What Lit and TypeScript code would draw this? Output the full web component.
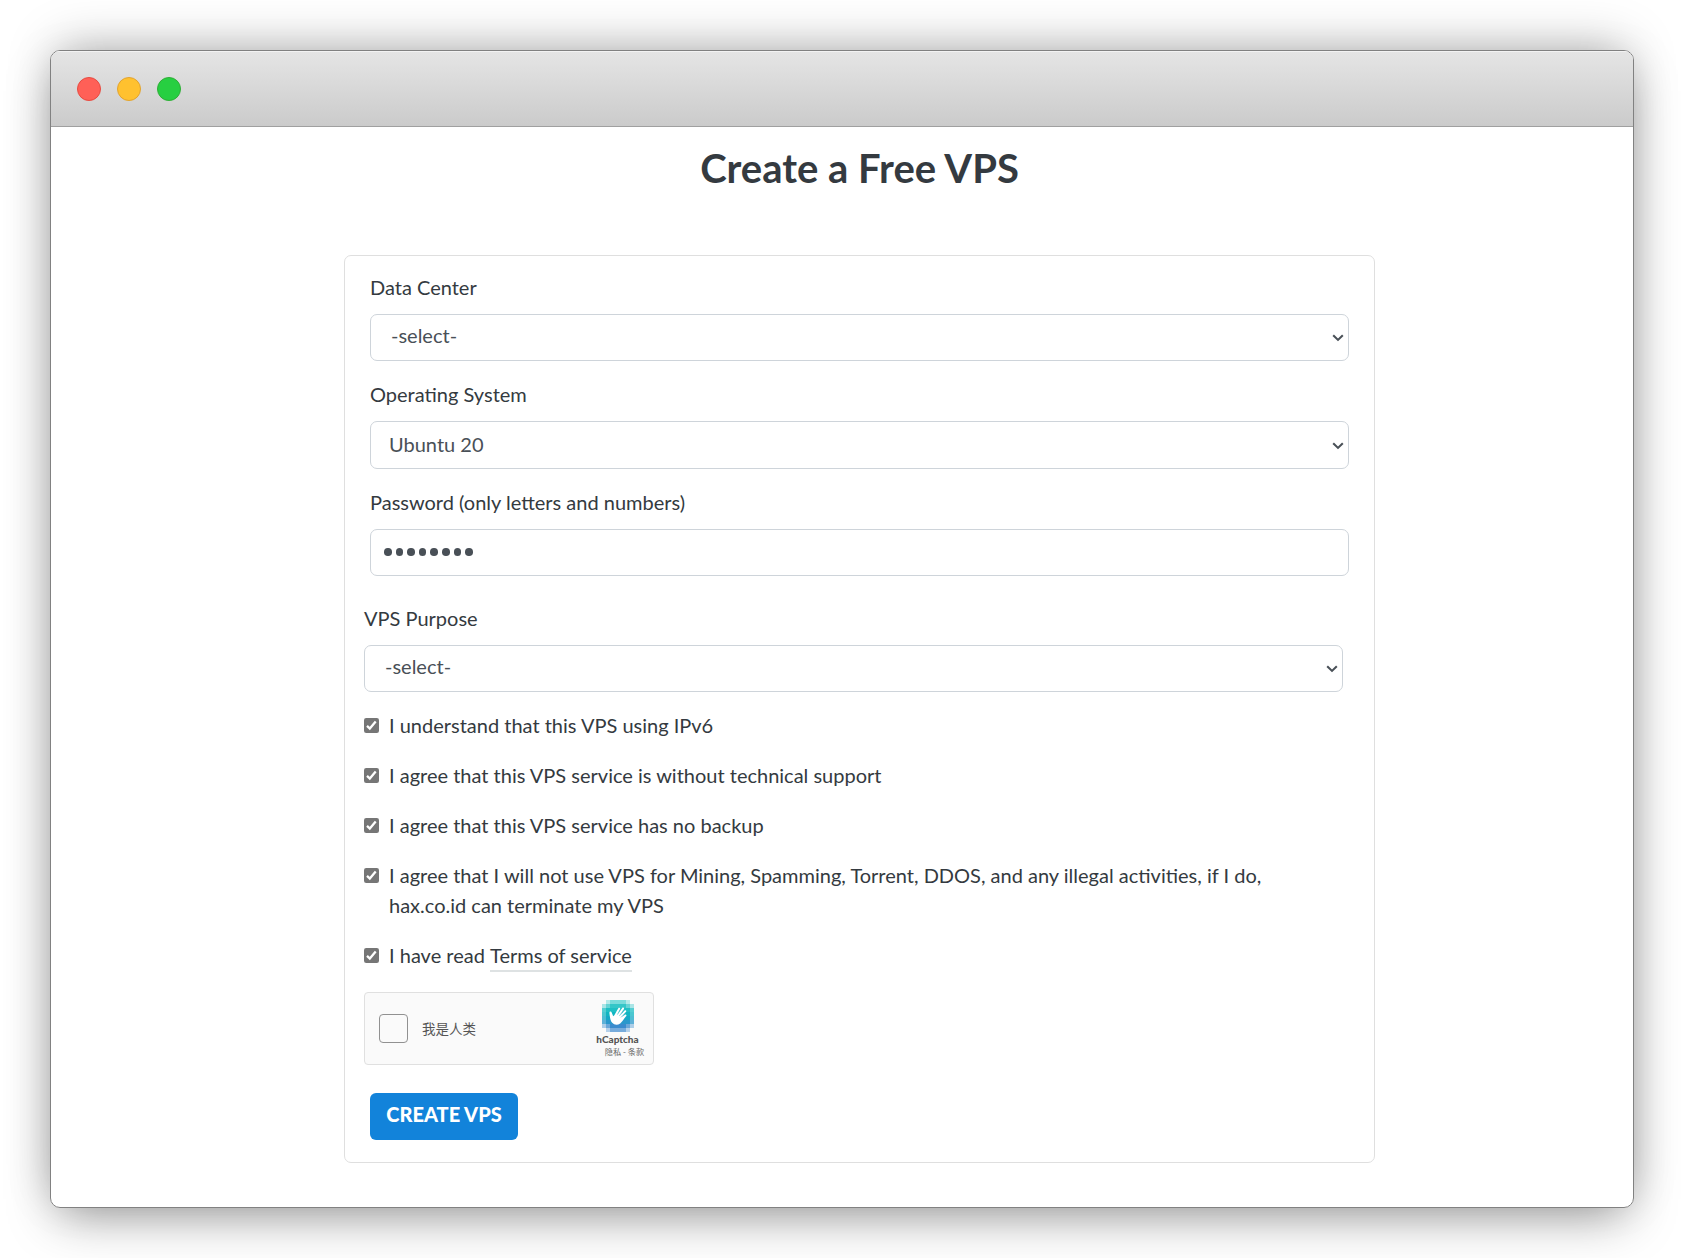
import { LitElement, html, css, svg } from "lit";
import { customElement } from "lit/decorators.js";

const chevron = html`<svg class="chevron" width="12" height="8" viewBox="0 0 12 8">
  <path d="M1.2 1.3 L6 5.9 L10.8 1.3" fill="none" stroke="#495057" stroke-width="2.1" />
</svg>`;

const tick = html`<svg class="tick" width="15" height="15" viewBox="0 0 15 15">
  <rect width="15" height="15" rx="2.2" fill="#767676" />
  <path d="M3 7.9 L5.8 10.6 L11.7 3.5" fill="none" stroke="#fff" stroke-width="2.3" />
</svg>`;

/* Pixel disc of the captcha mark: 8 × 8 cells, teal above and blue below, fading at the rim. */
const discColours = [
  "#4fd0d0", "#35c6c8", "#1fbfc4", "#10b5c2", "#14a9c6", "#2a98cc", "#3a8bce", "#4a90d2",
];
const cells = discColours.flatMap((fill, y) =>
  Array.from({ length: 8 }, (_, x) => {
    const r = Math.hypot(x - 3.5, y - 3.5);
    const opacity = r > 4.5 ? 0 : r > 4.2 ? 0.4 : r > 3.4 ? 0.75 : 1;
    return svg`<rect x=${x * 4} y=${y * 4} width="4" height="4" fill=${fill} opacity=${opacity} shape-rendering="crispEdges" />`;
  })
);

const logo = html`<svg class="logo" width="32" height="32" viewBox="0 0 32 32">
  ${cells}
  <path d="M10.2 22.8 C8.2 20.5 8 17.5 7.4 13 C7.4 11.3 9.2 11 9.7 12.6 L11.2 16.2 L12.3 15.3 L16.3 8.2 C17 7.1 18.6 7.9 18.1 9.2 L16 14 L20.2 8 C21 7 22.6 8 21.9 9.2 L18.3 15.2 L22.6 10.5 C23.6 9.6 24.8 10.8 24 11.9 L20 17 L23 14.8 C24.1 14.1 25 15.3 24.1 16.2 C22 18.3 20.6 21.4 18.2 23.4 C15.6 25.4 12.4 25.2 10.2 22.8 Z" fill="#fff" />
  <path d="M18 9.5 L15.4 14.6 M21.8 9.6 L17.4 15.9 M23.8 12.2 L19 17.4" stroke="#35bcca" stroke-width=".6" />
</svg>`;

@customElement("app-root")
export class AppRoot extends LitElement {
  static styles = css`
    :host {
      display: block;
      box-sizing: border-box;
      height: 1258px;
      padding: 50px;
      overflow: hidden;
      background: #fff;
      font: 400 20px/30px Lato, sans-serif;
      color: #343a40;
    }
    * { box-sizing: border-box; }
    .window {
      height: 1158px;
      border: 1px solid #818181;
      border-radius: 10px;
      overflow: hidden;
      background: #fff;
    }
    .shadow {
      border-radius: 10px;
      box-shadow: 0 16px 50px -8px rgba(0, 0, 0, 0.38), 0 -12px 50px -8px rgba(0, 0, 0, 0.25);
    }
    .bar {
      display: flex;
      align-items: center;
      gap: 16px;
      height: 76px;
      padding: 0 26px;
      border-bottom: 1px solid #a0a0a0;
      background: linear-gradient(#e5e5e5, #cbcbcb);
      box-shadow: inset 0 1px #f3f3f3;
    }
    .dot { width: 24px; height: 24px; border-radius: 50%; border: 1px solid; }
    .red { background: #ff6057; border-color: #e74b41; }
    .yellow { background: #ffc12f; border-color: #e2a32f; }
    .green { background: #27cf41; border-color: #2fae36; }
    .page { padding: 17px 0 0 293px; width: 1324px; }
    h1 {
      margin: 0 0 63px;
      text-align: center;
      font-size: 40px;
      line-height: 48px;
      font-weight: 700;
    }
    .card {
      width: 1031px;
      height: 908px;
      border: 1px solid #dfdfdf;
      border-radius: 7px;
      padding: 16px 25px 0;
    }
    .field { margin-bottom: 18px; }
    .label { display: block; margin-bottom: 12px; }
    .control {
      display: flex;
      align-items: center;
      justify-content: space-between;
      width: 979px;
      height: 47px;
      padding: 0 4px 5px 20px;
      border: 1px solid #ced4da;
      border-radius: 7px;
      color: #495057;
    }
    .chevron { margin-top: 5px; }
    .os { height: 48px; padding-left: 18px; padding-bottom: 2px; }
    .os .chevron { margin-top: 4px; }
    .password { justify-content: flex-start; gap: 4px; padding: 0 0 1px 13px; }
    .bullet { width: 7.6px; height: 7.6px; border-radius: 50%; background: #495057; }
    .lower { margin-left: -6px; padding-top: 9px; }
    .lower .field { margin-bottom: 19px; }
    .check { display: flex; gap: 10px; margin-bottom: 20px; }
    .copy { margin: -1px 0 1px; }
    .tick { flex: none; margin-top: 7px; }
    .terms { display: inline-block; height: 32px; border-bottom: 2px solid #dee2e3; }
    .captcha {
      display: flex;
      align-items: center;
      width: 290px;
      height: 73px;
      margin-top: -1px;
      padding-left: 14px;
      border: 1px solid #e0e0e0;
      border-radius: 4px;
      background: #fafafa;
    }
    .box { width: 29px; height: 29px; border: 1px solid #919191; border-radius: 4px; background: #fafafa; }
    .human { flex: 1; margin: 0 0 2px 14px; font: 13.5px/20px "Noto Sans CJK SC", sans-serif; color: #555; }
    .brand { display: flex; flex-direction: column; align-items: center; width: 71px; height: 71px; padding-top: 7px; }
    .logo { display: block; }
    .name { font-size: 10px; line-height: 12px; font-weight: 900; color: #555; margin-top: 1px; }
    .legal { font: 8.2px/12px "Noto Sans CJK SC", sans-serif; color: #666; margin: 0 0 0 14px; white-space: nowrap; }
    .create {
      display: block;
      width: 148px;
      height: 47px;
      margin: 28px 0 0 6px;
      padding: 0 0 5px;
      border: 0;
      border-radius: 6px;
      background: #1283da;
      color: #fff;
      font: 900 20px/30px Lato, sans-serif;
      white-space: nowrap;
    }
  `;

  private check(content: unknown) {
    return html`<div class="check">${tick}<div class="copy">${content}</div></div>`;
  }

  render() {
    return html`<div class="shadow"><div class="window">
      <div class="bar">
        <span class="dot red"></span><span class="dot yellow"></span><span class="dot green"></span>
      </div>
      <div class="page">
        <h1>Create a Free VPS</h1>
        <div class="card">
          <div class="field">
            <span class="label">Data Center</span>
            <div class="control"><span>-select-</span>${chevron}</div>
          </div>
          <div class="field">
            <span class="label">Operating System</span>
            <div class="control os"><span>Ubuntu 20</span>${chevron}</div>
          </div>
          <div class="field">
            <span class="label">Password (only letters and numbers)</span>
            <div class="control password">${Array.from({ length: 8 }, () => html`<i class="bullet"></i>`)}</div>
          </div>
          <div class="lower">
            <div class="field">
              <span class="label">VPS Purpose</span>
              <div class="control"><span>-select-</span>${chevron}</div>
            </div>
            ${this.check("I understand that this VPS using IPv6")}
            ${this.check("I agree that this VPS service is without technical support")}
            ${this.check("I agree that this VPS service has no backup")}
            ${this.check(html`I agree that I will not use VPS for Mining, Spamming, Torrent, DDOS, and any illegal activities, if I do,<br />hax.co.id can terminate my VPS`)}
            ${this.check(html`I have read <span class="terms">Terms of service</span>`)}
            <div class="captcha">
              <span class="box"></span>
              <span class="human">我是人类</span>
              <div class="brand">
                ${logo}
                <span class="name">hCaptcha</span>
                <span class="legal">隐私 - 条款</span>
              </div>
            </div>
            <button class="create">CREATE VPS</button>
          </div>
        </div>
      </div>
    </div></div>`;
  }
}
